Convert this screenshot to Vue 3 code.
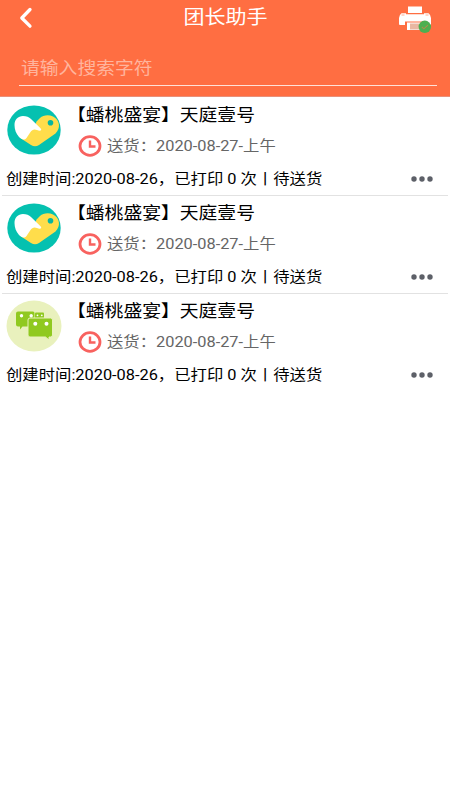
<script setup>
const orders = [
  { id: 1, icon: 'heart' },
  { id: 2, icon: 'heart' },
  { id: 3, icon: 'chat' },
].map((o) => ({
  ...o,
  name: '【蟠桃盛宴】天庭壹号',
  delivery: '送货：2020-08-27-上午',
  summary: '创建时间:2020-08-26，已打印 0 次丨待送货',
}))
</script>

<template>
  <div class="page">
    <header class="header">
      <div class="bar">
        <svg class="back" viewBox="0 0 14 22"><path d="M11 2.500 2.800 11l8.200 8.200" /></svg>
        <h1 class="title"><span class="wide">团长助手</span></h1>
        <svg class="printer" viewBox="0 0 34 28">
          <path fill="#fff" d="M10 1.500h14v6.500H10zM3.500 8.200H8v1h18v-1h4.500Q33 10 33 13v6q0 1-1 1h-5v-3.500H7V20H2q-1 0-1-1v-6q0-3 2.500-4.800z" />
          <path fill="#fff" d="M9 17.500h15v7.500H9z" />
          <path fill="#e9b7a2" d="M12 18.500h11v6H12z" />
          <path fill="#ffab91" d="M3.500 9.500h3v1h-3zM27.500 9.500h3v1h-3z" />
          <circle cx="26.800" cy="21.800" r="6.200" fill="#4caf50" />
          <path fill="none" stroke="#b08d4b" stroke-width="1.100" d="m23.800 21.800 2.100 2 4-3.700" />
        </svg>
      </div>
      <div class="search"><span class="wide">请输入搜索字符</span></div>
    </header>
    <main class="list">
      <article v-for="o in orders" :key="o.id" class="order">
        <div class="top">
          <svg v-if="o.icon === 'heart'" class="avatar" viewBox="0 0 56 52" preserveAspectRatio="none">
            <ellipse cx="28" cy="26" rx="26.700" ry="24.600" fill="#05c1b0" />
            <path fill="#ffdd4b" d="M30.500 17.500L34 14C37 11 43 10.500 47 12.500C54 16 55 24 49.500 29.500L33 41Q29 43.500 25 41L15 34.500L20 25L29 22z" />
            <path fill="#fff" d="M17 12C20.500 12 23 13 25 15L34.500 24.300C36.500 26.500 34 27.500 31 26C28 24.500 26 26 24.500 28L20.500 34C18.500 36.500 15.500 35.800 13 33C10 29.500 8.500 25.500 8.500 21C8.500 15.500 12 12 17 12z" />
            <circle cx="44.500" cy="18.700" r="2.800" fill="#05b5a2" />
          </svg>
          <svg v-else class="avatar" viewBox="0 0 56 52" preserveAspectRatio="none">
            <ellipse cx="28" cy="26" rx="27.500" ry="25.500" fill="#e9f1bd" />
            <rect x="29" y="12.500" width="9" height="6" rx="1" fill="#90c920" />
            <path fill="#90c920" d="M12 11.500h15q1.500 0 1.500 1.500v13.500H16.500l-2.500 3v-3h-2q-2 0-2-2v-11q0-2 2-2z" />
            <path fill="#90c920" stroke="#e9f1bd" stroke-width="1" d="M24 18h20.500q2 0 2 2v15q0 2-2 2h-1.500v3l-3.500-3H24q-2 0-2-2V20q0-2 2-2z" />
            <g fill="#fff"><circle cx="15.500" cy="15.800" r="1.700" /><circle cx="25.200" cy="15.800" r="1.700" /><circle cx="29.300" cy="23.800" r="2" /><circle cx="40.500" cy="23.800" r="2" /><circle cx="31.500" cy="15.300" r=".9" /><circle cx="35.800" cy="15.300" r=".9" /></g>
          </svg>
          <div class="info">
            <div class="name"><span class="wide">{{ o.name }}</span></div>
            <div class="delivery">
              <svg class="clock" viewBox="0 0 24 22" preserveAspectRatio="none">
                <ellipse cx="12" cy="11" rx="10" ry="9.300" />
                <path class="hands" d="M12 5.500v6h5.500" />
              </svg>
              <span class="wide">{{ o.delivery }}</span>
            </div>
          </div>
        </div>
        <div class="bottom">
          <span class="wide">{{ o.summary }}</span>
          <svg class="more" viewBox="0 0 24 6"><circle cx="4" cy="3" r="2.700" /><circle cx="12" cy="3" r="2.700" /><circle cx="20" cy="3" r="2.700" /></svg>
        </div>
      </article>
    </main>
  </div>
</template>

<style>
body { background: #fff; }
</style>

<style scoped>
.page {
  height: 800px;
  overflow: hidden;
  background: #fff;
  color: #000;
  font-family: Roboto, "Noto Sans CJK SC", sans-serif;
}
.page * { box-sizing: border-box; }
.wide {
  display: inline-block;
  white-space: nowrap;
  transform: scaleX(1.12);
  transform-origin: left center;
}
.header {
  height: 97px;
  background: #ff6e42;
  border-bottom: 1px solid #e9907a;
}
.bar {
  height: 34px;
  display: grid;
  grid-template-columns: 80px 1fr 79px;
  align-items: center;
}
.back {
  width: 14px;
  height: 22px;
  margin-left: 19px;
  fill: none;
  stroke: #fff;
  stroke-width: 3.3;
  stroke-linecap: round;
  stroke-linejoin: round;
}
.title {
  margin: 0;
  padding-top: 1px;
  text-align: center;
  color: #fff;
  font-size: 18.8px;
  line-height: 34px;
  font-weight: 400;
}
.title .wide { transform-origin: center; }
.printer {
  width: 34px;
  height: 28px;
  margin: 2px 0 0 27px;
}
.search {
  height: 52px;
  margin: 0 13px 0 19px;
  padding: 17px 0 0 2px;
  border-bottom: 1px solid #ffe1d8;
  color: #ffb49d;
  font-size: 16.8px;
  line-height: 34px;
}
.list { padding-top: 1px; }
.order {
  height: 98px;
  margin: 0 2px;
  border-bottom: 1px solid #e2e2e2;
}
.order:last-child { border-bottom: 0; }
.top {
  height: 65px;
  display: flex;
  padding: 6px 0 0 4px;
}
.avatar {
  width: 56px;
  height: 52px;
  flex: none;
}
.info { padding-left: 5px; }
.name {
  height: 22px;
  font-size: 16.8px;
  line-height: 22px;
}
.delivery {
  display: flex;
  align-items: center;
  height: 22px;
  margin: 9px 0 0 11px;
  color: #666;
  font-size: 14.6px;
  line-height: 22px;
}
.clock {
  width: 24px;
  height: 22px;
  margin-right: 5px;
  fill: none;
  stroke: #f8625f;
  stroke-width: 2.8;
}
.hands { stroke-width: 2.4; }
.bottom {
  display: flex;
  justify-content: space-between;
  align-items: center;
  height: 32px;
  padding: 0 14px 0 4px;
  font-size: 14.6px;
  line-height: 32px;
}
.more {
  width: 24px;
  height: 6px;
  fill: #5d6068;
}
</style>
